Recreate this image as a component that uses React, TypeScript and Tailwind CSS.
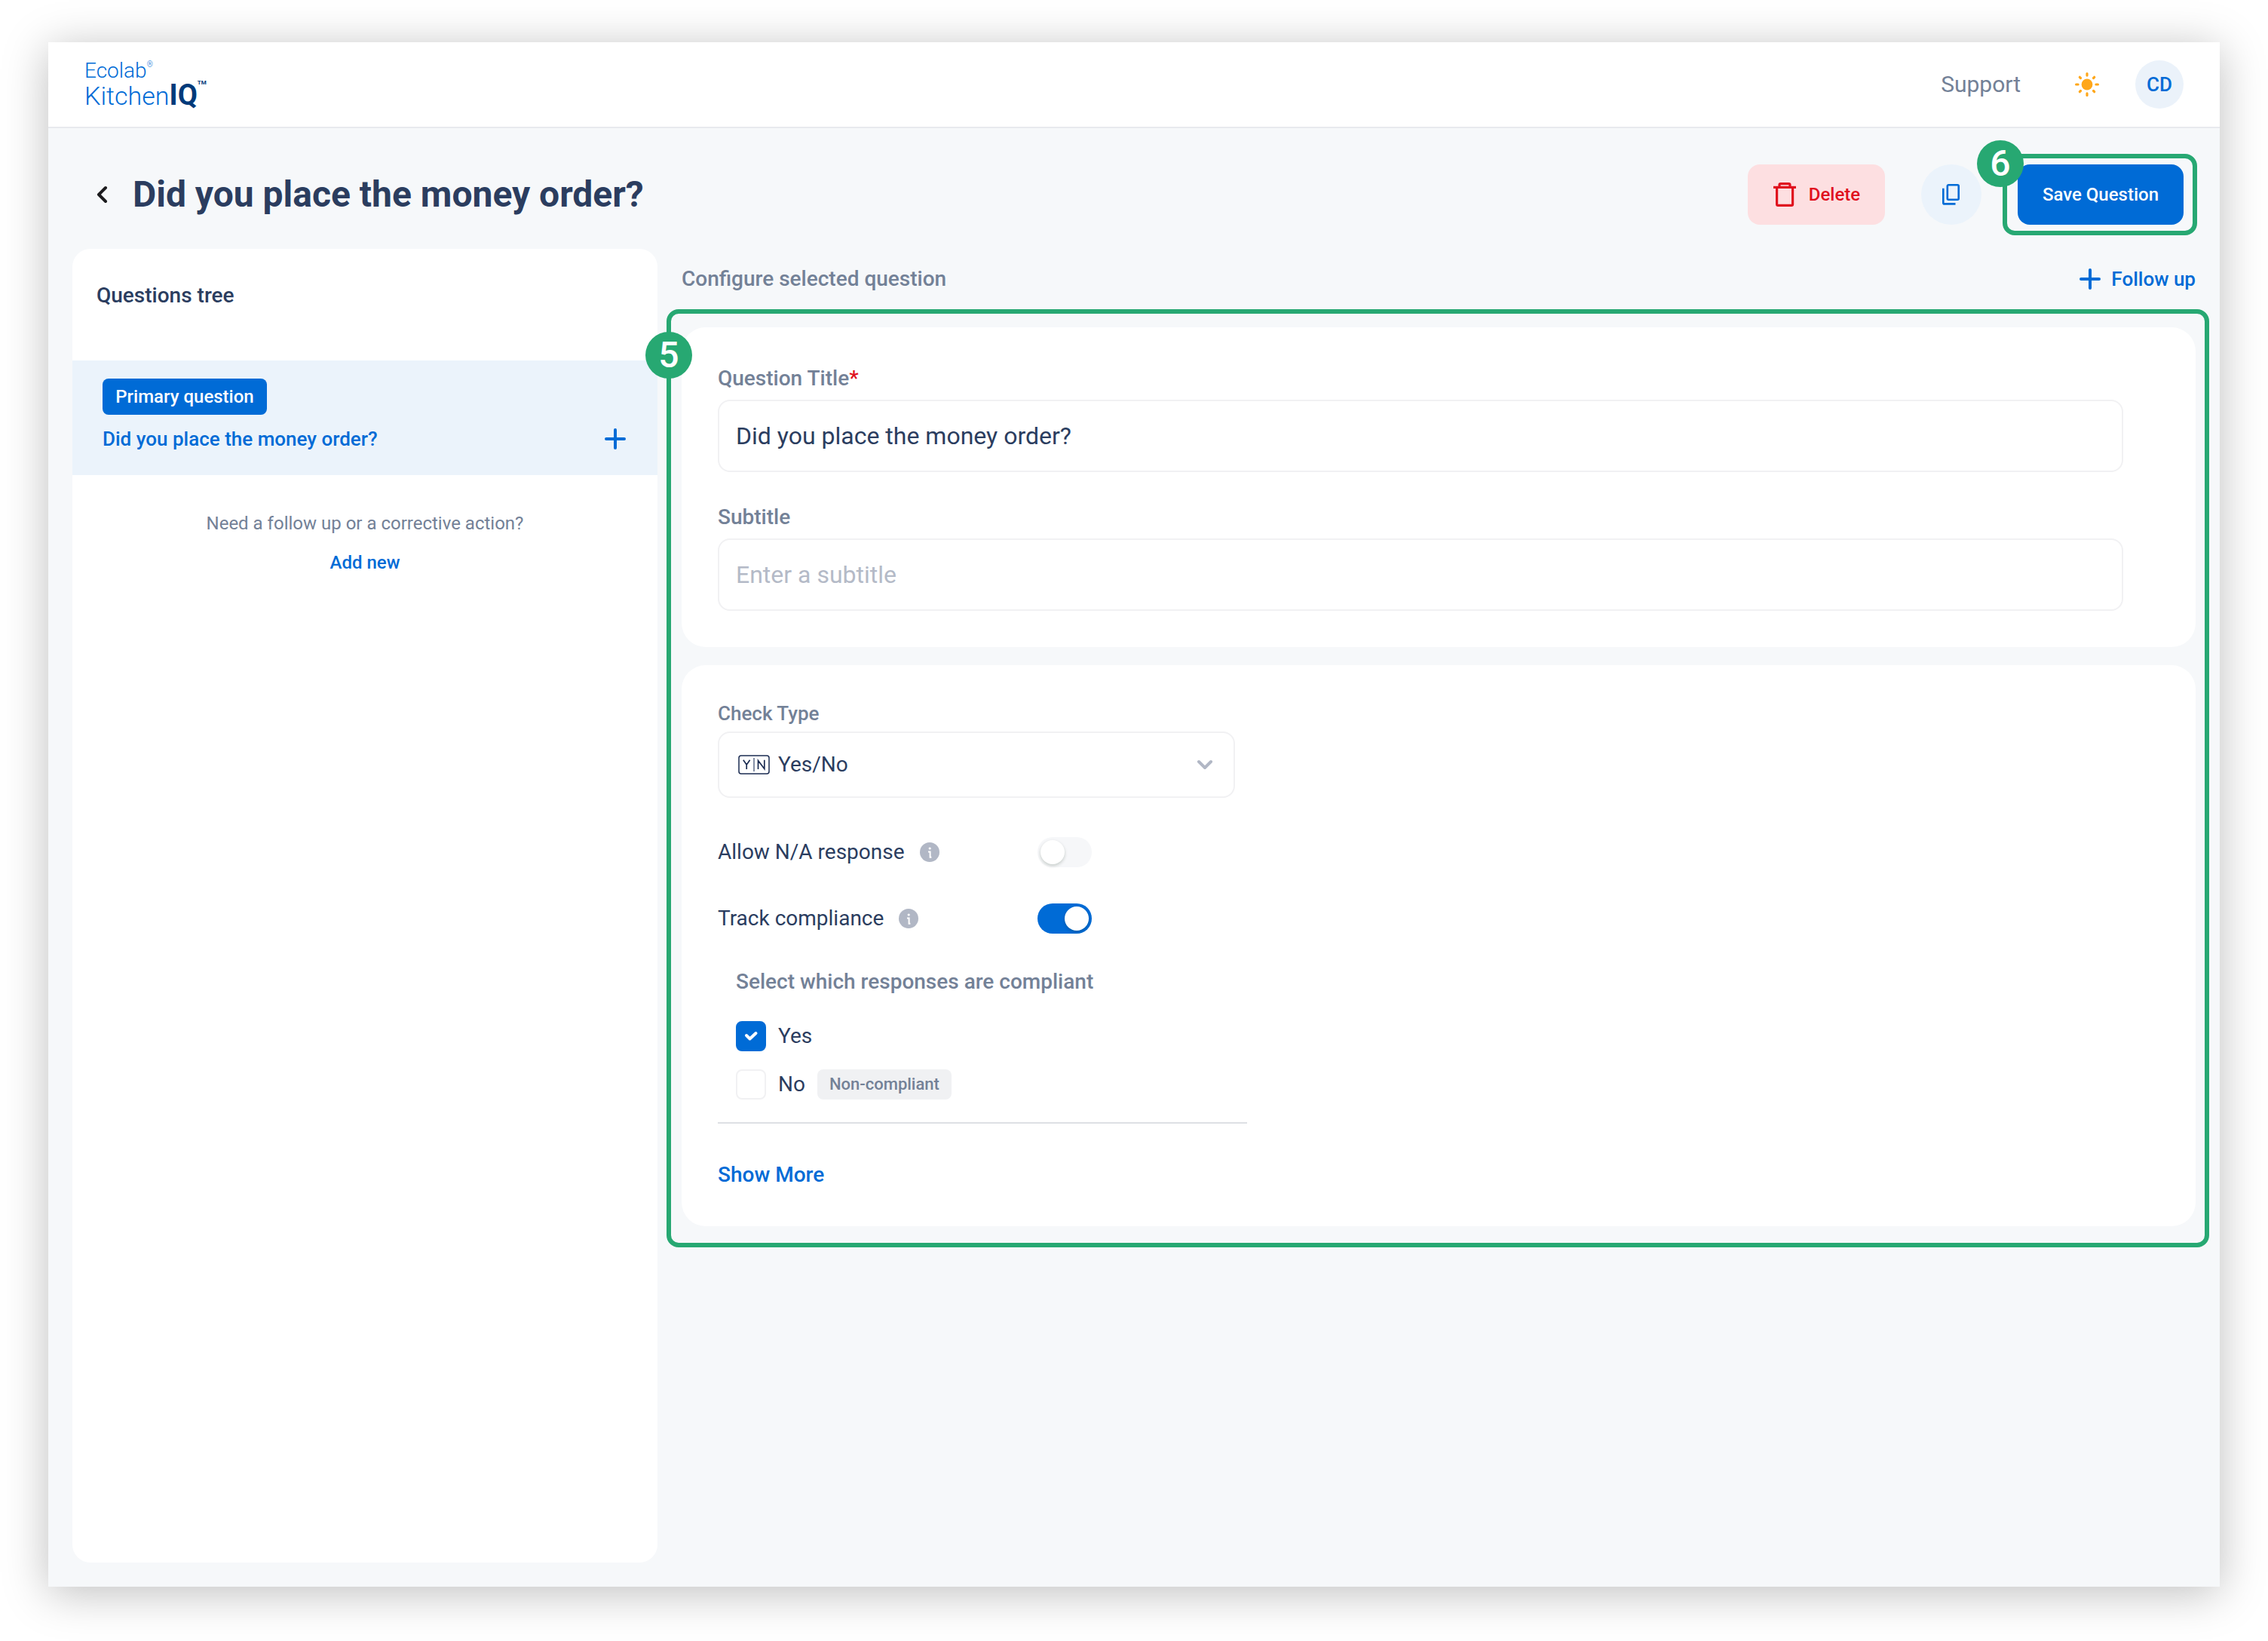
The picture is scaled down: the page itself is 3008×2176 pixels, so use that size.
import { useState } from 'react';
import type { ReactNode } from 'react';

function PlusIcon() {
  return (
    <svg className="size-7" viewBox="0 0 28 28" fill="none" stroke="currentColor" strokeWidth="4" strokeLinecap="round" aria-hidden="true">
      <path d="M14 2v24M2 14h24" />
    </svg>
  );
}

function SunIcon() {
  return (
    <svg className="size-8" viewBox="0 0 32 32" stroke="#ffa71a" strokeWidth="3.2" strokeLinecap="round" aria-hidden="true">
      <circle cx="16" cy="16" r="7.4" fill="#ffa71a" stroke="none" />
      <path d="M16 1.600v2.500M16 27.900v2.500M1.600 16h2.500M27.900 16h2.500M6.300 6.300l1.200 1.200M24.500 24.500l1.200 1.200M6.300 25.700l1.200-1.200M24.500 7.500l1.200-1.200" />
    </svg>
  );
}

function TrashIcon() {
  return (
    <svg className="size-8" viewBox="0 0 32 32" fill="none" stroke="currentColor" strokeWidth="3.2" aria-hidden="true">
      <path d="M1 6.400h30" />
      <path d="M9 6V3.200a1.600 1.600 0 0 1 1.600-1.600h10.800A1.600 1.600 0 0 1 23 3.200V6" />
      <path d="M5.600 7v21.800a1.600 1.600 0 0 0 1.600 1.600h17.800a1.600 1.600 0 0 0 1.600-1.600V7" />
    </svg>
  );
}

function CopyIcon() {
  return (
    <svg className="size-8" viewBox="0 0 32 32" fill="none" stroke="currentColor" strokeWidth="2.6" strokeLinejoin="round" aria-hidden="true">
      <rect x="10.8" y="3.3" width="14.9" height="19.4" rx="1.5" />
      <path d="M5.300 7.700v19.200a1.500 1.500 0 0 0 1.500 1.500h14.700" />
    </svg>
  );
}

function InfoIcon() {
  return (
    <svg className="size-[26px]" viewBox="0 0 26 26" aria-hidden="true">
      <circle cx="13" cy="13" r="13" fill="#b1b7c5" />
      <circle cx="13.2" cy="8" r="1.6" fill="#fff" />
      <path d="M11 12.500h2.600v7.200h1.800" fill="none" stroke="#fff" strokeWidth="2" />
    </svg>
  );
}

function YesNoIcon() {
  return (
    <svg className="h-[26px] w-[42px]" viewBox="0 0 42 26" fill="none" stroke="#1b2c52" strokeWidth="1.5" aria-hidden="true">
      <rect x="1" y="1" width="40" height="24" rx="3" />
      <path d="M21 4v18" stroke="#5b6a87" />
      <path d="M6.800 6.700l4.400 6.300 4.400-6.300M11.200 13v6M26.500 19V7.500l8.300 11V6.700" strokeWidth="1.7" />
    </svg>
  );
}

function Step({ n }: { n: number }) {
  return (
    <span className="flex size-[62px] items-center justify-center rounded-full bg-[#27a872] text-[48px] leading-none font-medium text-white">
      {n}
    </span>
  );
}

type ToggleRowProps = { id: string; label: string; checked: boolean; onChange: (v: boolean) => void };

function ToggleRow({ id, label, checked, onChange }: ToggleRowProps) {
  return (
    <div className="flex h-10 items-center">
      <div className="flex w-[424px] items-center gap-5">
        <label htmlFor={id} className="text-[28px] leading-10">{label}</label>
        <InfoIcon />
      </div>
      <span className="relative h-10 w-[72px]">
        <input
          id={id}
          type="checkbox"
          role="switch"
          checked={checked}
          onChange={(e) => onChange(e.target.checked)}
          className="peer block h-10 w-[72px] cursor-pointer appearance-none rounded-full bg-[#f6f7f9] checked:bg-[#006bd6]"
        />
        <span className="pointer-events-none absolute top-1 left-1 size-8 rounded-full bg-white shadow-[0_2px_4px_rgba(0,35,11,0.2)] peer-checked:left-9" />
      </span>
    </div>
  );
}

type CheckRowProps = { id: string; label: string; checked: boolean; onChange: (v: boolean) => void; children?: ReactNode };

function CheckRow({ id, label, checked, onChange, children }: CheckRowProps) {
  return (
    <div className="flex h-10 items-center gap-4">
      <span className="relative size-10">
        <input
          id={id}
          type="checkbox"
          checked={checked}
          onChange={(e) => onChange(e.target.checked)}
          className="peer block size-10 cursor-pointer appearance-none rounded-lg border-2 border-[#f1f1f3] bg-white checked:border-[#006bd6] checked:bg-[#006bd6]"
        />
        <svg className="pointer-events-none absolute inset-0 hidden size-10 peer-checked:block" viewBox="0 0 40 40" fill="none" stroke="#fff" strokeWidth="4" strokeLinecap="round" strokeLinejoin="round" aria-hidden="true">
          <path d="M14 19l4.500 4.500L26.500 16" />
        </svg>
      </span>
      <label htmlFor={id} className="text-[28px] leading-10">{label}</label>
      {children}
    </div>
  );
}

export default function App() {
  const [title, setTitle] = useState('Did you place the money order?');
  const [subtitle, setSubtitle] = useState('');
  const [allowNa, setAllowNa] = useState(false);
  const [track, setTrack] = useState(true);
  const [yes, setYes] = useState(true);
  const [no, setNo] = useState(false);

  return (
    <div className="flex min-h-screen flex-col bg-white px-16 pt-14 pb-[72px] font-['Roboto',sans-serif] text-[#2b3d5f]">
      <div className="flex flex-1 flex-col bg-[#f6f8fa] shadow-[0_8px_56px_rgba(0,0,0,0.26)]">
        <header className="flex h-[114px] items-center justify-between border-b-2 border-[#e8eaee] bg-white px-12">
          <a href="#" className="pb-1 text-[#006bd6]">
            <span className="flex h-8 items-start text-[28px] leading-8 font-light">
              Ecolab<span className="text-[10px] leading-4">®</span>
            </span>
            <span className="flex h-8 items-baseline text-[34px] leading-8 font-light">
              Kitchen<span className="text-[38px] leading-8 font-bold text-[#003a7a]">IQ</span>
              <span className="-mt-1 self-start text-[8px] leading-2 font-bold text-[#003a7a]">TM</span>
            </span>
          </a>
          <div className="flex items-center">
            <a href="#" className="mr-[72px] text-[30px] leading-10 text-[#738197]">Support</a>
            <button aria-label="Light theme" className="mr-12"><SunIcon /></button>
            <button className="size-16 rounded-full bg-[#ebf2fa] text-[26px] leading-8 font-medium text-[#006bd6]">CD</button>
          </div>
        </header>

        <main className="flex flex-1 flex-col px-8 pb-8">
          <div className="flex items-center justify-between pt-12 pr-4 pb-8">
            <div className="flex items-center">
              <button aria-label="Back" className="mx-6">
                <svg className="size-8" viewBox="0 0 32 32" fill="none" stroke="#1c1c1e" strokeWidth="4" strokeLinecap="round" strokeLinejoin="round" aria-hidden="true">
                  <path d="M20 7l-9 9 9 9" />
                </svg>
              </button>
              <h1 className="text-[48px] leading-[56px] font-bold">Did you place the money order?</h1>
            </div>
            <div className="flex items-center gap-12">
              <button className="flex h-20 w-[182px] items-center justify-center gap-4 rounded-2xl bg-[#fddfe1] text-[24px] leading-8 font-medium text-[#e0101e]">
                <TrashIcon />
                Delete
              </button>
              <button aria-label="Duplicate question" className="flex size-20 items-center justify-center rounded-full bg-[#ebf3fb] text-[#006bd6]">
                <CopyIcon />
              </button>
              <div className="relative">
                <button className="h-20 w-[220px] rounded-2xl bg-[#006bd6] text-[24px] leading-8 font-medium text-white">
                  Save Question
                </button>
                <div className="pointer-events-none absolute -inset-y-3.5 -right-[18px] -left-5 rounded-2xl border-6 border-[#27a872]" />
                <div className="absolute -top-8 -left-[54px]"><Step n={6} /></div>
              </div>
            </div>
          </div>

          <div className="flex flex-1 gap-8">
            <aside className="w-[776px] shrink-0 rounded-3xl bg-white">
              <h2 className="px-8 pt-[42px] pb-[66px] text-[28px] leading-10 font-medium">Questions tree</h2>
              <div className="flex h-[152px] flex-col items-start bg-[#ebf3fb] pt-6 pr-[42px] pl-10">
                <span className="w-[218px] rounded-lg bg-[#006bd6] py-2 text-center text-[24px] leading-8 font-medium text-white">Primary question</span>
                <div className="flex w-full items-center justify-between pt-3 text-[26px] leading-10 font-medium text-[#006bd6]">
                  <a href="#">Did you place the money order?</a>
                  <button aria-label="Add follow up"><PlusIcon /></button>
                </div>
              </div>
              <div className="flex flex-col items-center gap-3 pt-11 text-[24px] leading-10">
                <p className="text-[#738197]">Need a follow up or a corrective action?</p>
                <button className="font-medium text-[#006bd6]">Add new</button>
              </div>
            </aside>

            <section className="flex-1">
              <div className="flex h-20 items-center justify-between">
                <h2 className="text-[28px] leading-10 font-medium text-[#738197]">Configure selected question</h2>
                <button className="flex items-center gap-3.5 text-[26px] leading-10 font-medium text-[#006bd6]">
                  <PlusIcon />
                  Follow up
                </button>
              </div>

              <div className="relative -mr-[18px] -ml-5 rounded-2xl border-6 border-[#27a872] pt-[18px] pr-3 pb-[22px] pl-3.5">
                <div className="absolute top-6 -left-[34px]"><Step n={5} /></div>
                <div className="flex flex-col gap-6">
                  <div className="flex flex-col gap-10 rounded-[32px] bg-white py-12 pr-24 pl-12">
                    <div className="flex flex-col gap-2">
                      <label htmlFor="title" className="text-[28px] leading-10 font-medium text-[#738197]">
                        Question Title<span className="text-[#e0101e]">*</span>
                      </label>
                      <input
                        id="title"
                        type="text"
                        value={title}
                        onChange={(e) => setTitle(e.target.value)}
                        className="h-24 w-full rounded-2xl border-2 border-[#f1f1f3] bg-white px-[22px] text-[32px] leading-10 outline-none"
                      />
                    </div>
                    <div className="flex flex-col gap-2">
                      <label htmlFor="subtitle" className="text-[28px] leading-10 font-medium text-[#738197]">Subtitle</label>
                      <input
                        id="subtitle"
                        type="text"
                        value={subtitle}
                        onChange={(e) => setSubtitle(e.target.value)}
                        placeholder="Enter a subtitle"
                        className="h-24 w-full rounded-2xl border-2 border-[#f1f1f3] bg-white px-[22px] text-[32px] leading-10 outline-none placeholder:text-[#b4bac7]"
                      />
                    </div>
                  </div>

                  <div className="rounded-[32px] bg-white p-12">
                    <div className="flex w-[686px] flex-col gap-2">
                      <label htmlFor="check-type" className="text-[26px] leading-8 font-medium text-[#738197]">Check Type</label>
                      <div className="relative">
                        <select
                          id="check-type"
                          className="h-[88px] w-full appearance-none rounded-2xl border-2 border-[#f1f1f3] bg-white pl-[78px] text-[28px] leading-10 outline-none"
                        >
                          <option>Yes/No</option>
                        </select>
                        <div className="pointer-events-none absolute inset-0 flex items-center justify-between pr-7 pl-[27px]">
                          <YesNoIcon />
                          <svg className="h-3.5 w-6" viewBox="0 0 24 14" fill="none" stroke="#b1b7c5" strokeWidth="4" strokeLinecap="round" strokeLinejoin="round" aria-hidden="true">
                            <path d="M4 3l8 8 8-8" />
                          </svg>
                        </div>
                      </div>
                    </div>

                    <div className="flex flex-col gap-12 pt-[52px]">
                      <ToggleRow id="allow-na" label="Allow N/A response" checked={allowNa} onChange={setAllowNa} />
                      <ToggleRow id="track" label="Track compliance" checked={track} onChange={setTrack} />
                    </div>

                    <div role="group" aria-labelledby="compliant-label" className="w-[702px] border-b-2 border-[#dde0e4] px-6 pt-11 pb-[30px]">
                      <p id="compliant-label" className="pb-8 text-[28px] leading-10 font-medium text-[#738197]">Select which responses are compliant</p>
                      <div className="flex flex-col gap-6">
                        <CheckRow id="yes" label="Yes" checked={yes} onChange={setYes} />
                        <CheckRow id="no" label="No" checked={no} onChange={setNo}>
                          <span className="rounded-lg bg-[#f0f1f3] px-4 text-[22px] leading-10 font-medium text-[#738197]">Non-compliant</span>
                        </CheckRow>
                      </div>
                    </div>

                    <button className="mt-12 block text-[28px] leading-10 font-medium text-[#006bd6]">Show More</button>
                  </div>
                </div>
              </div>
            </section>
          </div>
        </main>
      </div>
    </div>
  );
}
